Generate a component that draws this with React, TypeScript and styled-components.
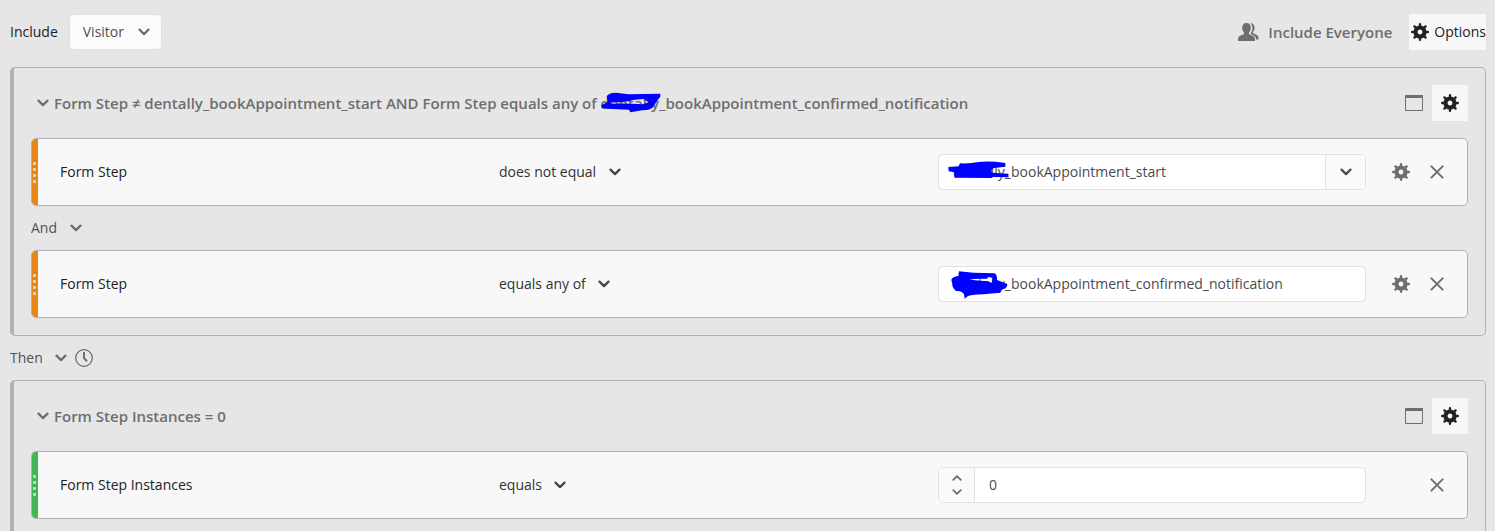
import React from 'react';
import styled, { createGlobalStyle } from 'styled-components';

const GlobalStyle = createGlobalStyle`
  *, *::before, *::after { box-sizing: border-box; }
  body {
    margin: 0;
    background: #e6e6e6;
    color: #222;
    font: 14px/20px 'Open Sans', 'Noto Sans', sans-serif;
  }
  button, input, select { font: inherit; color: inherit; }
`;

const Page = styled.main`
  height: 100vh;
  overflow: hidden auto;
  scrollbar-width: none;
  padding: 14px 9px 0 10px;
`;

const Toolbar = styled.header`
  display: flex;
  align-items: center;
  height: 36px;
  margin-bottom: 17px;
`;

const IncludeLabel = styled.label`
  display: flex;
  align-items: center;
  gap: 11px;
`;

const PlainButton = styled.button`
  display: inline-flex;
  align-items: center;
  justify-content: center;
  border: 0;
  padding: 0;
  background: none;
  cursor: pointer;
`;

const MutedButton = styled(PlainButton)`
  color: #6e6e6e;
`;

const EveryoneButton = styled(MutedButton)`
  gap: 9px;
  margin-left: auto;
  font-size: 15px;
  font-weight: 600;
`;

const OptionsButton = styled(PlainButton)`
  gap: 5px;
  height: 36px;
  margin-left: 17px;
  padding: 0 0 0 2px;
  background: #f8f8f8;
`;

const IconButton = styled(PlainButton)<{ $filled?: boolean }>`
  width: 36px;
  height: 36px;
  color: ${(p) => (p.$filled ? '#222' : '#6e6e6e')};
  background: ${(p) => (p.$filled ? '#f8f8f8' : 'none')};
`;

const SelectBox = styled.span<{ $boxed?: boolean; $strong?: boolean }>`
  position: relative;
  display: inline-flex;
  align-items: center;
  justify-self: start;
  color: ${(p) => (p.$strong ? '#323232' : '#505050')};

  select {
    appearance: none;
    height: 36px;
    padding: ${(p) => (p.$boxed ? '0 36px 0 13px' : '0 24px 0 0')};
    border: ${(p) => (p.$boxed ? '1px solid #e0e0e0' : '0')};
    border-radius: 4px;
    background: ${(p) => (p.$boxed ? '#fbfbfb' : 'transparent')};
  }
  svg {
    position: absolute;
    right: ${(p) => (p.$boxed ? '12px' : '0')};
    color: ${(p) => (p.$strong ? '#444' : '#6e6e6e')};
    pointer-events: none;
  }
`;

const Group = styled.section`
  padding: 17px;
  border: 1px solid #b1b1b1;
  border-left-width: 4px;
  border-radius: 5px;
`;

const GroupHeader = styled.div`
  display: flex;
  align-items: center;
  height: 36px;
  margin-bottom: 17px;
  padding-left: 6px;
`;

const GroupTitle = styled.h2`
  flex: 1;
  margin: 0 0 0 5px;
  color: #6e6e6e;
  font-size: 15px;
  font-weight: 600;
  white-space: nowrap;
`;

const Connector = styled.div`
  display: flex;
  align-items: center;
  gap: 8px;
  height: 44px;
`;

const Rule = styled.div`
  display: flex;
  align-items: center;
  height: 68px;
  padding-right: 12px;
  border: 1px solid #b1b1b1;
  border-radius: 5px;
  background: #f8f8f8;
`;

const Grip = styled.span<{ $color: string }>`
  display: flex;
  flex-direction: column;
  align-items: center;
  justify-content: center;
  gap: 3px;
  align-self: stretch;
  width: 6px;
  padding-right: 1px;
  border-radius: 4px 0 0 4px;
  background: ${(p) => p.$color};
`;

const GripDot = styled.i`
  width: 3px;
  height: 3px;
  border-radius: 1px;
  background: rgba(255, 255, 255, 0.65);
`;

const Fields = styled.div`
  flex: 1;
  display: grid;
  grid-template-columns: repeat(3, minmax(0, 1fr));
  align-items: center;
  gap: 11px;
  margin-left: 22px;
`;

const Actions = styled.div`
  display: flex;
  justify-content: flex-end;
  width: 72px;
  margin-left: 17px;
`;

const ValueBox = styled.div`
  position: relative;
  display: flex;
  height: 36px;
  border: 1px solid #e0e0e0;
  border-radius: 5px;
  background: #fff;
  color: #4b4b4b;
  overflow: hidden;

  input {
    flex: 1;
    min-width: 0;
    border: 0;
    padding: 0 14px;
    background: none;
    outline: none;
  }
`;

const DropButton = styled(PlainButton)`
  width: 40px;
  border-left: 1px solid #e0e0e0;
  background: #fafafa;
`;

const Stepper = styled.div`
  display: flex;
  flex-direction: column;
  justify-content: center;
  gap: 2px;
  width: 36px;
  border-right: 1px solid #e0e0e0;
  background: #fafafa;
`;

const StepButton = styled(MutedButton)`
  height: 12px;
`;

const Marked = styled.span`
  position: relative;
`;

const Scribble = styled.svg<{ $left: number; $top: number }>`
  position: absolute;
  left: ${(p) => p.$left}px;
  top: ${(p) => p.$top}px;
  fill: #0000fe;
  fill-rule: evenodd;
  pointer-events: none;
`;

const Chevron = () => (
  <svg width="12" height="8" viewBox="0 0 12 8" fill="none" stroke="currentColor" strokeWidth="2.2" strokeLinecap="round" strokeLinejoin="round" aria-hidden="true">
    <path d="M1.5 1.6 6 6.1l4.5-4.5" />
  </svg>
);

const StepArrow = ({ up }: { up?: boolean }) => (
  <svg width="10" height="6" viewBox="0 0 10 6" fill="none" stroke="currentColor" strokeWidth="1.8" strokeLinecap="round" strokeLinejoin="round" aria-hidden="true">
    <path d={up ? 'M1.2 4.9 5 1.1l3.8 3.8' : 'M1.2 1.1 5 4.9l3.8-3.8'} />
  </svg>
);

const Gear = () => (
  <svg width="18" height="18" viewBox="-9 -9 18 18" fill="none" stroke="currentColor" aria-hidden="true">
    <circle r="4.5" strokeWidth="4.2" />
    <path strokeWidth="2.4" strokeLinecap="round" d="M0-5.5V-7.8M0 5.500V7.800M-5.500 0H-7.800M5.500 0H7.800M4-4l1.600-1.600M4 4l1.600 1.600M-4-4l-1.600-1.600M-4 4l-1.600 1.600" />
  </svg>
);

const Cross = () => (
  <svg width="14" height="14" viewBox="0 0 14 14" fill="none" stroke="currentColor" strokeWidth="2" strokeLinecap="round" aria-hidden="true">
    <path d="m1.400 1.400 11.200 11.200M12.600 1.400 1.400 12.600" />
  </svg>
);

const WindowIcon = () => (
  <svg width="18" height="16" viewBox="0 0 18 16" aria-hidden="true">
    <path d="M.5.5h17v15H.5z" fill="none" stroke="currentColor" />
    <path d="M0 0h18v3H0z" fill="currentColor" />
  </svg>
);

const Clock = () => (
  <svg width="18" height="18" viewBox="0 0 18 18" fill="none" stroke="currentColor" aria-hidden="true">
    <circle cx="9" cy="9" r="8.3" strokeWidth="1.3" />
    <path d="M9 3v6l3 3.2" strokeWidth="2" />
  </svg>
);

const People = () => (
  <svg width="21" height="18" viewBox="0 0 21 18" fill="currentColor" aria-hidden="true">
    <path d="M8.5 0c2.7 0 4.3 2 4.3 4.7 0 2-.8 3.8-1.9 5 0 1.1.5 1.6 1.6 2 2.6.9 4.5 1.8 4.5 4.3v2H0v-2c0-2.5 1.9-3.4 4.5-4.3 1.1-.4 1.6-.9 1.6-2-1.1-1.2-1.900-3-1.900-5C4.200 2 5.800 0 8.500 0z" />
    <path d="M12.300.2c2.500-.2 4.300 1.600 4.300 4.300 0 1.900-.8 3.300-1.700 4.500 0 1 .4 1.300 1.400 1.700 2.300.9 4.200 1.700 4.200 4.100v1.700h-2.300c0-2.900-1.700-4.200-4.900-5.300-.5-.2-.7-.6-.5-1.100 1-1.400 1.600-3.300 1.600-5.400 0-1.900-.7-3.500-2.100-4.500z" />
  </svg>
);

const HeadingScribble = () => (
  <Scribble $left={0} $top={-3} width="60" height="25" viewBox="120 30 180 75" aria-hidden="true">
    <path d="M121 76 140 66 137 48Q145 38 165 38L203 43 298 41Q300 50 293 56L274 84Q262 92 244 91L208 97 204 89 140 86 122 84ZM150 66Q190 68 215 60L247 57 263 67 245 73Q200 70 150 71Z" />
  </Scribble>
);

const StartScribble = () => (
  <Scribble $left={6} $top={5} width="65" height="20" viewBox="75 60 195 60" aria-hidden="true">
    <path d="M85 81 116 79 120 70Q155 71 175 66 210 62 256 69L256 80 222 84Q212 88 216 98L265 101 266 112 219 111 214 114 103 113 103 97 86 94Z" />
  </Scribble>
);

const ConfirmedScribble = () => (
  <Scribble $left={11} $top={3} width="60" height="30" viewBox="90 45 180 90" aria-hidden="true">
    <path d="M94 74 Q98 65 115 63L117 49 160 53 224 55Q232 60 231 75L262 87Q262 102 244 104L240 113 190 118Q160 119 144 123L134 131 132 118Q125 106 108 108 96 98 97 88ZM148 72 202 71 204 66 218 68 216 83 202 79 165 76Z" />
  </Scribble>
);

type DropdownProps = { label?: string; value: string; strong?: boolean; boxed?: boolean };

const Dropdown = ({ label, value, strong, boxed }: DropdownProps) => (
  <SelectBox $boxed={boxed} $strong={strong}>
    <select aria-label={label} defaultValue={value}>
      <option>{value}</option>
    </select>
    <Chevron />
  </SelectBox>
);

type RuleRowProps = {
  name: string;
  operator: string;
  color: string;
  configurable?: boolean;
  children: React.ReactNode;
};

const RuleRow = ({ name, operator, color, configurable, children }: RuleRowProps) => (
  <Rule>
    <Grip $color={color}>
      {[0, 1, 2, 3].map((n) => <GripDot key={n} />)}
    </Grip>
    <Fields>
      <span>{name}</span>
      <Dropdown label={`${name} operator`} value={operator} strong />
      <ValueBox>{children}</ValueBox>
    </Fields>
    <Actions>
      {configurable && <IconButton aria-label="Rule settings"><Gear /></IconButton>}
      <IconButton aria-label="Remove rule"><Cross /></IconButton>
    </Actions>
  </Rule>
);

const Header = ({ children }: { children: React.ReactNode }) => (
  <GroupHeader>
    <MutedButton aria-label="Collapse group"><Chevron /></MutedButton>
    <GroupTitle>{children}</GroupTitle>
    <IconButton aria-label="Container"><WindowIcon /></IconButton>
    <IconButton $filled aria-label="Group settings"><Gear /></IconButton>
  </GroupHeader>
);

export default function App() {
  return (
    <>
      <GlobalStyle />
      <Page>
        <Toolbar>
          <IncludeLabel>
            Include
            <Dropdown value="Visitor" boxed />
          </IncludeLabel>
          <EveryoneButton><People />Include Everyone</EveryoneButton>
          <OptionsButton><Gear />Options</OptionsButton>
        </Toolbar>

        <Group>
          <Header>
            Form Step ≠ dentally_bookAppointment_start AND Form Step equals any of{' '}
            <Marked>dentally<HeadingScribble /></Marked>_bookAppointment_confirmed_notification
          </Header>
          <RuleRow name="Form Step" operator="does not equal" color="#e68619" configurable>
            <input aria-label="Form Step value" defaultValue="dentally_bookAppointment_start" />
            <StartScribble />
            <DropButton aria-label="Show values"><Chevron /></DropButton>
          </RuleRow>
          <Connector>
            <Dropdown label="Rule connector" value="And" />
          </Connector>
          <RuleRow name="Form Step" operator="equals any of" color="#e68619" configurable>
            <input aria-label="Form Step values" defaultValue="dentally_bookAppointment_confirmed_notification" />
            <ConfirmedScribble />
          </RuleRow>
        </Group>

        <Connector>
          <Dropdown label="Group connector" value="Then" />
          <MutedButton aria-label="Time constraint"><Clock /></MutedButton>
        </Connector>

        <Group>
          <Header>Form Step Instances = 0</Header>
          <RuleRow name="Form Step Instances" operator="equals" color="#44b556">
            <Stepper>
              <StepButton aria-label="Increase"><StepArrow up /></StepButton>
              <StepButton aria-label="Decrease"><StepArrow /></StepButton>
            </Stepper>
            <input aria-label="Form Step Instances value" defaultValue="0" />
          </RuleRow>
        </Group>
      </Page>
    </>
  );
}
